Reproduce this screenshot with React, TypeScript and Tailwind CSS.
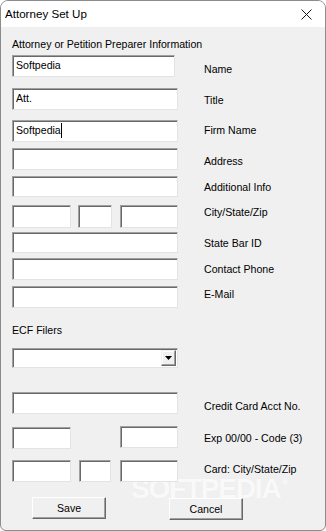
import React from 'react'

// sunken win32 edit box
const Edit = ({ w, h = 'h-[22px]', value, caret }: { w: string; h?: string; value?: string; caret?: boolean }) => (
    <div
        className={`${w} ${h} bg-white border border-t-[#a0a0a0] border-l-[#a0a0a0] border-r-[#e3e3e3] border-b-[#e3e3e3] shadow-[inset_1px_1px_0_#696969] pl-[3px] pt-[2px] flex items-start`}
    >
        {value && <span className="leading-[14px] text-black">{value}</span>}
        {caret && <span className="w-px h-[15px] bg-black" />}
    </div>
)

const Label = ({ text, top }: { text: string; top: string }) => (
    <div className={`ml-[26px] ${top} leading-[14px] whitespace-nowrap`}>{text}</div>
)

const Btn = ({ text, extra }: { text: string; extra: string }) => (
    <button
        className={`relative z-10 w-[74px] h-[22px] bg-[#f0f0f0] border border-t-white border-l-white border-r-[#696969] border-b-[#696969] shadow-[inset_-1px_-1px_0_#a0a0a0] leading-[14px] text-black ${extra}`}
    >
        {text}
    </button>
)

const App: React.FC = () => {
    return (
        <div
            className="relative w-[326px] h-[531px] bg-[#f0f0f0] border border-[#8c8c8c] rounded-t-[8px] rounded-b-[6px] overflow-hidden text-[10.6px] text-black"
            style={{ fontFamily: '"Liberation Sans", Arial, sans-serif' }}
        >
            {/* title bar */}
            <div className="h-[26px] bg-white flex items-center justify-between pl-[4px] pr-[13px]">
                <span className="text-[11.6px] leading-[16px]">Attorney Set Up</span>
                <svg width="11" height="11" viewBox="0 0 11 11" className="mt-[1px]">
                    <path d="M0.5 0.5 L10.5 10.5 M10.5 0.5 L0.5 10.5" stroke="#1a1a1a" strokeWidth="1" />
                </svg>
            </div>

            {/* watermark */}
            <div className="absolute left-[130px] top-[478px] flex items-start pointer-events-none">
                <span className="text-[28px] font-bold tracking-[-1.2px] text-white/80 leading-[19px] [text-shadow:0_0_1px_rgba(0,0,0,0.06)]">SOFTPEDIA</span>
                <span className="text-[7px] text-white/80 leading-[8px] ml-[2px]">®</span>
            </div>

            <div className="relative pl-[11px] flex flex-col">
                <div className="mt-[10px] leading-[14px]">Attorney or Petition Preparer Information</div>

                <div className="mt-[4px] flex items-start">
                    <Edit w="w-[163px]" value="Softpedia" />
                    <Label text="Name" top="mt-[7px] !ml-[29px]" />
                </div>
                <div className="mt-[11px] flex items-start">
                    <Edit w="w-[166px]" value="Att." />
                    <Label text="Title" top="mt-[5px]" />
                </div>
                <div className="mt-[10px] flex items-start">
                    <Edit w="w-[166px]" value="Softpedia" caret />
                    <Label text="Firm Name" top="mt-[3px]" />
                </div>
                <div className="mt-[6px] flex items-start">
                    <Edit w="w-[166px]" />
                    <Label text="Address" top="mt-[6px]" />
                </div>
                <div className="mt-[6px] flex items-start">
                    <Edit w="w-[166px]" h="h-[21px]" />
                    <Label text="Additional Info" top="mt-[4px]" />
                </div>
                <div className="mt-[8px] flex items-start">
                    <div className="w-[166px] flex">
                        <Edit w="w-[59px]" h="h-[23px]" />
                        <div className="ml-[7px]">
                            <Edit w="w-[34px]" h="h-[23px]" />
                        </div>
                        <div className="ml-[8px]">
                            <Edit w="w-[58px]" h="h-[23px]" />
                        </div>
                    </div>
                    <Label text="City/State/Zip" top="mt-0" />
                </div>
                <div className="mt-[4px] flex items-start">
                    <Edit w="w-[166px]" h="h-[21px]" />
                    <Label text="State Bar ID" top="mt-[4px]" />
                </div>
                <div className="mt-[5px] flex items-start">
                    <Edit w="w-[166px]" />
                    <Label text="Contact Phone" top="mt-[4px]" />
                </div>
                <div className="mt-[6px] flex items-start">
                    <Edit w="w-[166px]" />
                    <Label text="E-Mail" top="mt-[1px]" />
                </div>

                <div className="mt-[15px] leading-[14px]">ECF Filers</div>

                {/* combo box */}
                <div className="mt-[11px] w-[166px] h-[20px] bg-white border border-t-[#a0a0a0] border-l-[#a0a0a0] border-r-[#e3e3e3] border-b-[#e3e3e3] shadow-[inset_1px_1px_0_#696969] flex justify-end items-start pt-[1px] pr-[1px]">
                    <div className="w-[15px] h-[16px] bg-[#f0f0f0] border border-t-[#f0f0f0] border-l-[#f0f0f0] border-r-[#696969] border-b-[#696969] shadow-[inset_-1px_-1px_0_#a0a0a0,inset_1px_1px_0_#ffffff] flex items-center justify-center">
                        <svg width="7" height="4" viewBox="0 0 7 4">
                            <path d="M0 0 H7 L3.5 4 Z" fill="#000" />
                        </svg>
                    </div>
                </div>

                <div className="mt-[24px] flex items-start">
                    <Edit w="w-[166px]" />
                    <Label text="Credit Card Acct No." top="mt-[7px]" />
                </div>
                <div className="mt-[12px] flex items-start">
                    <div className="w-[166px] flex items-start justify-between">
                        <div className="mt-[1px]">
                            <Edit w="w-[59px]" />
                        </div>
                        <Edit w="w-[58px]" />
                    </div>
                    <Label text="Exp 00/00 - Code (3)" top="mt-[5px]" />
                </div>
                <div className="mt-[11px] flex items-start">
                    <div className="w-[166px] flex">
                        <Edit w="w-[59px]" />
                        <div className="ml-[8px]">
                            <Edit w="w-[32px]" />
                        </div>
                        <div className="ml-[9px]">
                            <Edit w="w-[58px]" />
                        </div>
                    </div>
                    <Label text="Card: City/State/Zip" top="mt-[2px]" />
                </div>

                <div className="mt-[15px] flex items-start">
                    <Btn text="Save" extra="ml-[20px] border-t-[#696969] border-l-[#e3e3e3]" />
                    <Btn text="Cancel" extra="ml-[63px] mt-[1px]" />
                </div>
            </div>
        </div>
    )
}

export default App
